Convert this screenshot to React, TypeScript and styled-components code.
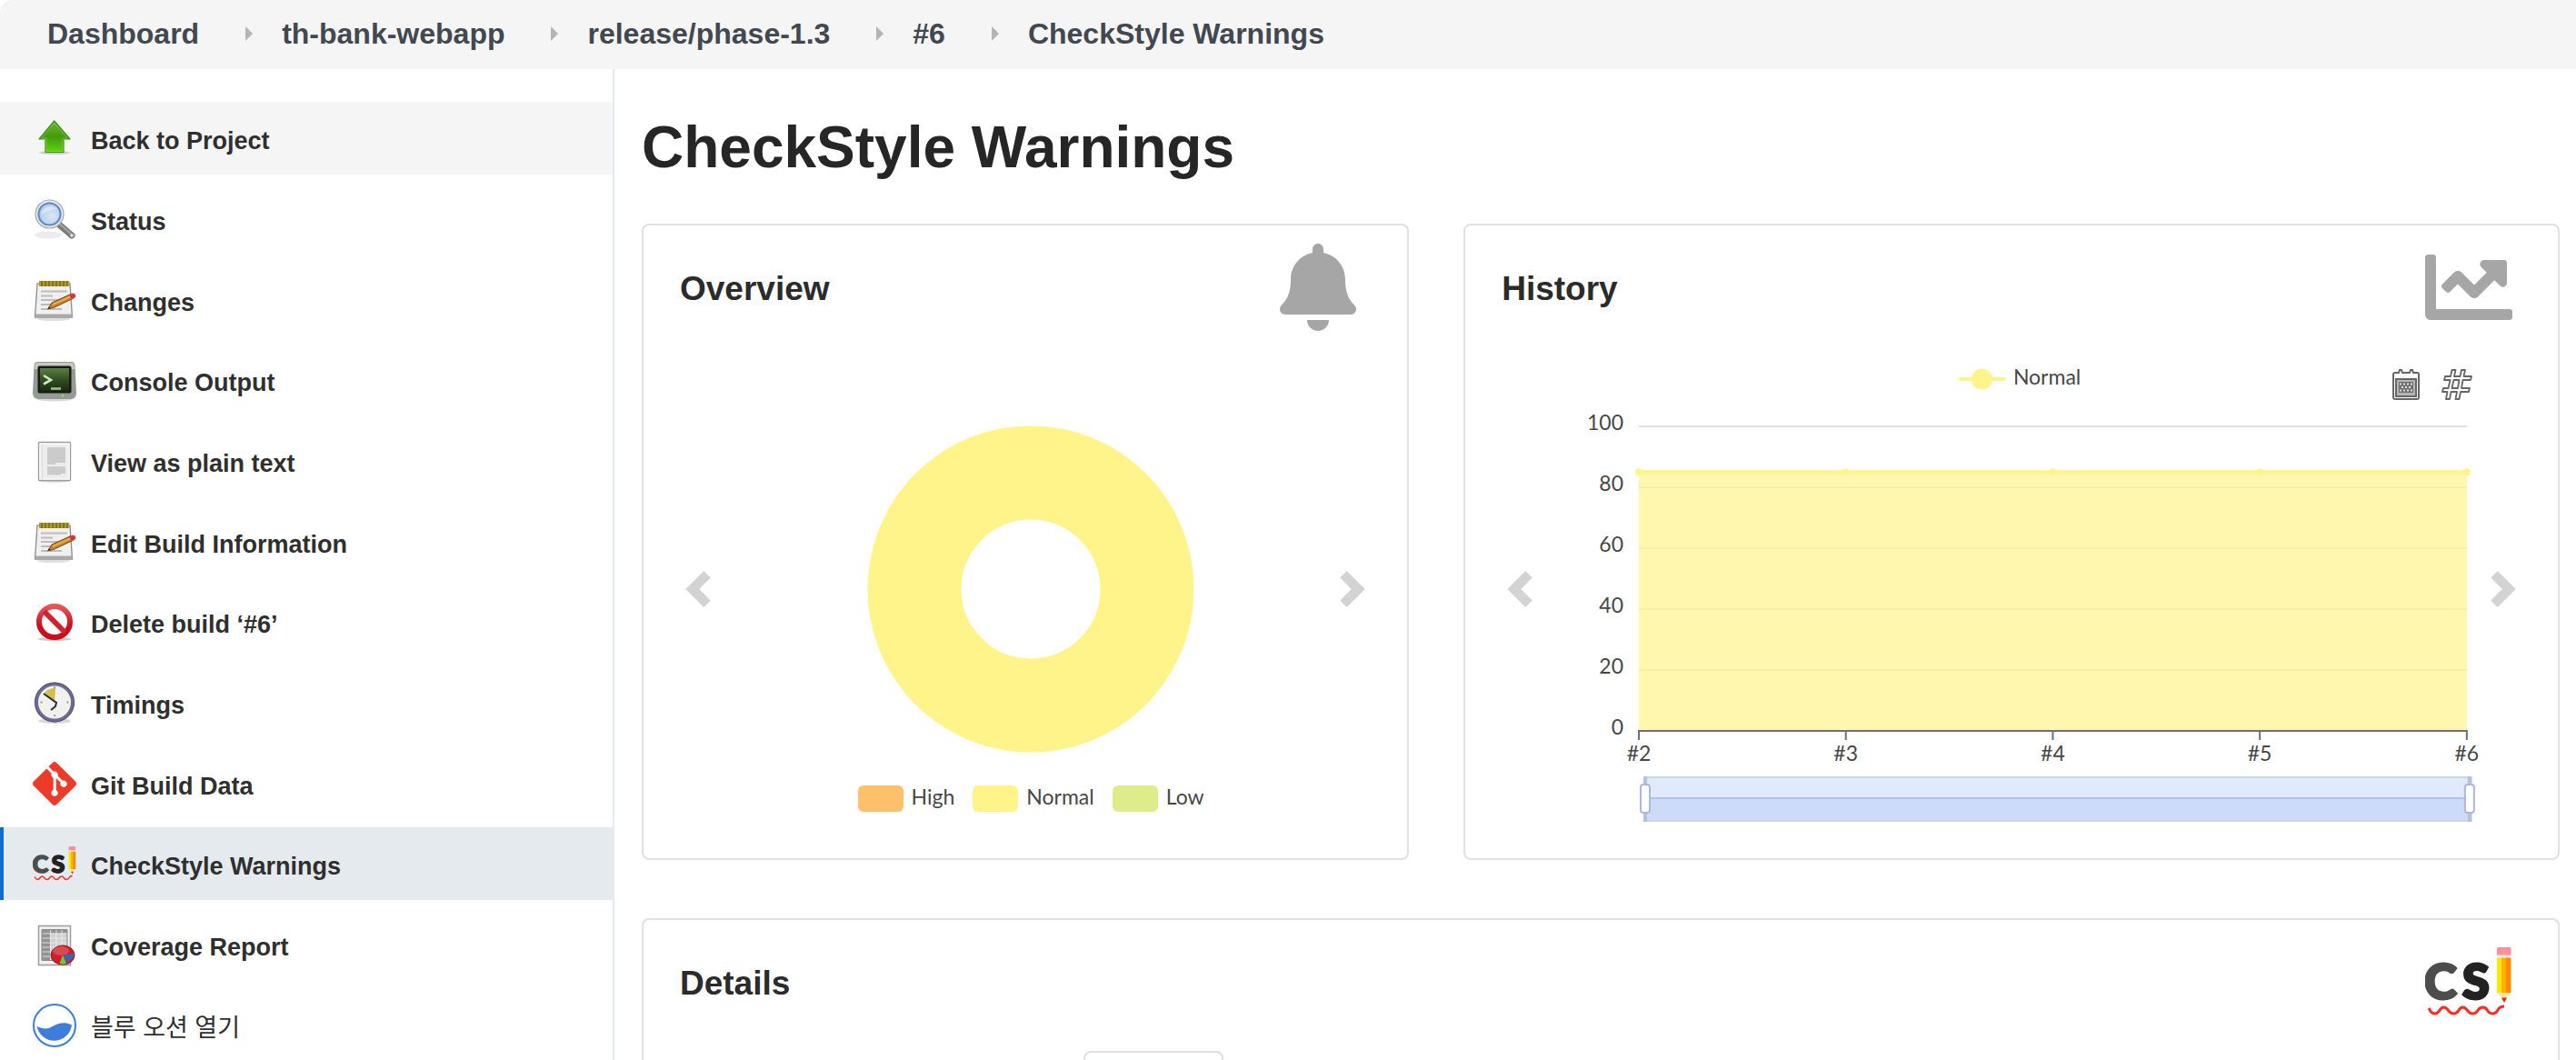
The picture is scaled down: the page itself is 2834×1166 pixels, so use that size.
import React from "react";
import styled, { createGlobalStyle, css } from "styled-components";
import { FaBell, FaChartLine } from "react-icons/fa";
import { SiGit } from "react-icons/si";

const GlobalStyle = createGlobalStyle`
  *, *::before, *::after { box-sizing: border-box; }
  body {
    margin: 0;
    background: #fff;
    color: #2b2b2b;
    font-family: "Liberation Sans", "Noto Sans CJK KR", sans-serif;
  }
`;

const Shell = styled.div`
  height: 100vh;
  overflow-y: auto;
  scrollbar-width: none;
`;

/* ---------- Breadcrumbs ---------- */

const Breadcrumbs = styled.nav`
  background: #f5f5f5;
  border-top-left-radius: 14px;
`;

const CrumbList = styled.ol`
  display: flex;
  align-items: center;
  height: 76px;
  margin: 0;
  padding: 0 52px 2px;
  list-style: none;
`;

const Crumb = styled.li`
  display: flex;
  align-items: center;

  & + &::before {
    content: "";
    margin: 0 32px 0 51px;
    border: 8px solid transparent;
    border-left-color: #b4b4b4;
    border-right-width: 0;
  }
`;

const CrumbLink = styled.a`
  color: #414851;
  font-size: 32px;
  font-weight: 700;
  line-height: 40px;
  text-decoration: none;
  white-space: nowrap;
`;

/* ---------- Sidebar ---------- */

const Body = styled.div`
  display: grid;
  grid-template-columns: 676px minmax(0, 1fr);
`;

const Sidebar = styled.nav`
  padding-top: 36px;
  border-right: 2px solid #e3eaf0;
`;

const TaskList = styled.ul`
  margin: 0;
  padding: 0;
  list-style: none;
`;

const Task = styled.li`
  margin-bottom: 9px;

  &:nth-child(3n) {
    margin-bottom: 8px;
  }
`;

const TaskLink = styled.a<{ $state?: "hover" | "active" }>`
  display: flex;
  align-items: center;
  gap: 16px;
  height: 80px;
  padding: 0 32px;
  border-left: 4px solid transparent;
  color: #2f2f2f;
  font-size: 27px;
  font-weight: 700;
  text-decoration: none;

  ${(p) => p.$state === "hover" && css`
    background: #f5f5f5;
    border-left-color: #f5f5f5;
  `}
  ${(p) => p.$state === "active" && css`
    background: #e5eaee;
    border-left-color: #0b6ed0;
  `}
`;

const TaskIcon = styled.span`
  display: flex;
  width: 48px;
  height: 48px;

  & > svg {
    width: 100%;
    height: 100%;
  }
`;

const TaskLabel = styled.span<{ $light?: boolean }>`
  padding-top: 5px;
  line-height: 32px;
  font-weight: ${(p) => (p.$light ? 400 : 700)};
`;

/* ---------- Main ---------- */

const Main = styled.main`
  padding: 46px 18px 0 30px;
`;

const PageTitle = styled.h1`
  margin: 0 0 44px;
  font-size: 64px;
  font-weight: 700;
  line-height: 80px;
  color: #262626;
`;

const Grid = styled.div`
  display: grid;
  grid-template-columns: repeat(12, minmax(0, 1fr));
  gap: 64px 60px;
`;

const Card = styled.section<{ $span: number }>`
  grid-column: span ${(p) => p.$span};
  border: 2px solid #e0e0e0;
  border-radius: 8px;
  background: #fff;
`;

const CardHeader = styled.header`
  display: flex;
  align-items: center;
  justify-content: space-between;
  padding: 20px 50px 0 40px;
`;

const CardTitle = styled.h2`
  margin: 0;
  padding-top: 3px;
  font-size: 37px;
  font-weight: 700;
  line-height: 44px;
`;

const CardIcon = styled.span`
  display: flex;
  align-items: center;
  justify-content: center;
  width: 96px;
  height: 96px;
  color: #a6a6a6;
  font-size: 96px;
`;

const Carousel = styled.div`
  display: grid;
  grid-template-columns: 40px minmax(0, 1fr) 40px;
  align-items: center;
  padding: 28px 40px 40px;
`;

const CarouselButton = styled.button`
  width: 40px;
  height: 40px;
  padding: 0;
  border: 0;
  background: none;
  color: #d3d3d3;

  & > svg {
    display: block;
    width: 100%;
    height: 100%;
  }
`;

const Slide = styled.div`
  display: flex;
  flex-direction: column;
  height: 512px;
`;

const PieSlide = styled(Slide)`
  align-items: center;
  gap: 36px;
  padding: 76px 0 0 12px;
`;

const Pie = styled.svg`
  width: 360px;
  height: 360px;
`;

const PieLegend = styled.div`
  display: flex;
  gap: 20px;
`;

const LegendItem = styled.button`
  display: flex;
  align-items: center;
  gap: 9px;
  padding: 0;
  border: 0;
  background: none;
  color: #474747;
  font-family: Lato, "Noto Sans", sans-serif;
  font-size: 23px;
  line-height: 24px;
`;

const Swatch = styled.span<{ $color: string }>`
  width: 50px;
  height: 29px;
  border-radius: 6px;
  background: ${(p) => p.$color};
`;

const SwatchLabel = styled.span`
  padding-bottom: 5px;
`;

const ChartTop = styled.div`
  display: grid;
  grid-template-columns: 1fr auto 1fr;
  align-items: start;
  height: 56px;
  padding: 10px 14px 0 32px;
`;

const LineMarker = styled.svg`
  width: 51px;
  height: 24px;
  overflow: visible;
`;

const Toolbox = styled.div`
  display: flex;
  justify-content: end;
  gap: 22px;
  padding-top: 4px;
`;

const ToolButton = styled.button`
  width: 34px;
  height: 34px;
  padding: 0;
  border: 0;
  background: none;
  color: #666;

  & > svg {
    display: block;
    width: 100%;
    height: 100%;
  }
`;

const Plot = styled.svg`
  width: 100%;
  height: 456px;
  overflow: visible;

  text {
    fill: #474747;
    font-family: Lato, "Noto Sans", sans-serif;
    font-size: 23px;
  }
`;

const Tabs = styled.div`
  display: flex;
  padding: 28px 40px 40px 484px;
`;

const Tab = styled.button`
  width: 154px;
  height: 80px;
  border: 2px solid #dce1e6;
  border-bottom-color: #fff;
  border-radius: 8px 8px 0 0;
  background: #fff;
`;

/* ---------- Icons ---------- */

const UpIcon = () => (
  <svg viewBox="0 0 48 48" aria-hidden="true">
    <defs>
      <linearGradient id="up" x1="0" y1="0" x2="0" y2="1">
        <stop offset="0" stopColor="#6cbb33" />
        <stop offset=".5" stopColor="#439a0e" />
        <stop offset="1" stopColor="#5fd50a" />
      </linearGradient>
    </defs>
    <ellipse cx="24" cy="40" rx="17" ry="2" fill="#000" opacity=".15" />
    <path d="M23.700 5 41 25H34V39.500H14V25H7Z" fill="url(#up)" stroke="#3f8f12" strokeWidth="1.200" strokeLinejoin="round" />
    <path d="M23.700 7 38 24H33V38.500H15V24H9.500Z" fill="none" stroke="#9be35f" strokeWidth=".8" opacity=".6" />
  </svg>
);

const SearchIcon = () => (
  <svg viewBox="0 0 48 48" aria-hidden="true">
    <defs>
      <radialGradient id="lens" cx=".6" cy=".6" r=".7">
        <stop offset="0" stopColor="#dbe7f6" />
        <stop offset="1" stopColor="#a9c6ec" />
      </radialGradient>
    </defs>
    <ellipse cx="17" cy="41.500" rx="15" ry="4" fill="#000" opacity=".08" />
    <path d="M29 30 43 42" stroke="#7c7c7c" strokeWidth="7" strokeLinecap="round" />
    <path d="M30 29.500 43 41" stroke="#a5a5a5" strokeWidth="2" strokeLinecap="round" />
    <circle cx="43" cy="42" r="1.800" fill="#e6e6e6" />
    <circle cx="18.500" cy="18.500" r="15.500" fill="#e8e8e6" stroke="#a9aaa8" strokeWidth="1.200" />
    <circle cx="18.500" cy="18.500" r="12" fill="url(#lens)" stroke="#5f8cc7" strokeWidth="2.200" />
    <path d="M9.500 20c0-6 4-10 10-10 3 0 5 1 7 3-7 0-12 3-17 7Z" fill="#fff" opacity=".4" />
  </svg>
);

const NotepadIcon = () => (
  <svg viewBox="0 0 48 48" aria-hidden="true">
    <ellipse cx="23" cy="45" rx="18" ry="2" fill="#000" opacity=".12" />
    <path d="M5 6H41L43.500 43H2.500Z" fill="#f0f0f0" stroke="#929292" strokeWidth="1.400" />
    <path d="M3 39.500H43.500V43.500H2.500Z" fill="#a8a9a8" />
    <rect x="7" y="3" width="33" height="6" fill="#85751a" />
    <path d="M8 3v6M12 3v6M16 3v6M20 3v6M24 3v6M28 3v6M32 3v6M36 3v6M39.500 3v6" stroke="#b5a32c" strokeWidth="1.600" />
    <path d="M9 14.500H38M9 19.500H22M9 24H30M9 29H21M9 34H32" stroke="#bcbcbc" strokeWidth="2" />
    <path d="M16.500 34 21 27 42 17.500 45 22 24 32Z" fill="#c98628" stroke="#75490f" strokeWidth="1" />
    <path d="M22 29 42 20" stroke="#eab45e" strokeWidth="1.400" />
    <path d="M16.500 34 18 31 20 33Z" fill="#4b3a1a" />
    <path d="M40 18.500 44 16.500Q48 17 47 21L43 23Z" fill="#e0323a" />
  </svg>
);

const ConsoleIcon = () => (
  <svg viewBox="0 0 48 48" aria-hidden="true">
    <defs>
      <linearGradient id="screen" x1="0" y1="0" x2="0" y2="1">
        <stop offset="0" stopColor="#5c8044" />
        <stop offset=".55" stopColor="#2f4b20" />
        <stop offset="1" stopColor="#1a2b12" />
      </linearGradient>
    </defs>
    <ellipse cx="24" cy="45" rx="19" ry="2.500" fill="#000" opacity=".15" />
    <path d="M5 4H43Q46 4 46.500 8L48 38Q48 45 42 45H6Q0 45 0 38L1.500 8Q2 4 5 4Z" fill="#959a94" />
    <path d="M5 5H43Q45 5 45.500 8L46 12H2L2.500 8Q3 5 5 5Z" fill="#c5c8c4" />
    <rect x="5.500" y="8.500" width="37" height="30" rx="2" fill="#171c14" />
    <rect x="8" y="11" width="32" height="25" fill="url(#screen)" />
    <path d="M12 19 20 24 12 28.500" fill="none" stroke="#c7ecc4" strokeWidth="2.600" />
    <path d="M20 33.500H31" stroke="#97c48e" strokeWidth="2.600" />
    <circle cx="33" cy="41" r="1.300" fill="#78ee3c" />
  </svg>
);

const DocumentIcon = () => (
  <svg viewBox="0 0 48 48" aria-hidden="true">
    <ellipse cx="24" cy="46" rx="17" ry="1.800" fill="#000" opacity=".15" />
    <rect x="6.500" y="3.500" width="35" height="42" rx="1" fill="#ededed" stroke="#9c9c9c" strokeWidth="1.400" />
    <rect x="8" y="5" width="32" height="39" fill="none" stroke="#fff" />
    <path d="M16 9H36V26H25V28H16ZM16 30H36V38H31V39.500H16Z" fill="#cbcbcb" />
    <path d="M10.500 6V44" stroke="#dcdcdc" />
  </svg>
);

const DeleteIcon = () => (
  <svg viewBox="0 0 48 48" aria-hidden="true">
    <defs>
      <linearGradient id="ban" x1="0" y1="0" x2="0" y2="1">
        <stop offset="0" stopColor="#e4565a" />
        <stop offset=".6" stopColor="#cf1020" />
        <stop offset="1" stopColor="#cc0a1a" />
      </linearGradient>
    </defs>
    <ellipse cx="24" cy="43" rx="18" ry="2" fill="#000" opacity=".2" />
    <circle cx="24" cy="24" r="17" fill="#fff" stroke="url(#ban)" strokeWidth="6" />
    <path d="M12.500 12.500 35.500 35.500" stroke="#d3222d" strokeWidth="6" />
  </svg>
);

const ClockIcon = () => (
  <svg viewBox="0 0 48 48" aria-hidden="true">
    <ellipse cx="24" cy="44" rx="18" ry="3" fill="#000" opacity=".15" />
    <circle cx="24" cy="23.500" r="20" fill="#f1f1ee" stroke="#6d6b93" strokeWidth="4" />
    <circle cx="24" cy="23.500" r="21.500" fill="none" stroke="#4c4a70" strokeWidth=".8" />
    <path d="M24 24 13 13Q17 8 25 8Z" fill="#d5be4e" />
    <path d="M12 14 26 24 25 28 20 32" fill="none" stroke="#2c2c2c" strokeWidth="2" />
    <path d="M24 6.500v2M24 37v2M8.500 23.500h2M37.500 23.500h2" stroke="#9c9c9c" strokeWidth="2" />
  </svg>
);

const CheckStyleIcon = () => (
  <svg viewBox="0 0 96 96" aria-hidden="true">
    <text x="-1" y="67" fontFamily="Lato, sans-serif" fontWeight="900" fontSize="54" fill="#4d4d4d" stroke="#4d4d4d" strokeWidth="3">C</text>
    <text x="41" y="67" fontFamily="Lato, sans-serif" fontWeight="900" fontSize="54" fill="#222" stroke="#222" strokeWidth="3">S</text>
    <rect x="79" y="10" width="15.500" height="10" rx="1.500" fill="#ff8f9c" />
    <rect x="79" y="18.500" width="15.500" height="3" fill="#ececec" />
    <rect x="79" y="21.500" width="6" height="38.500" fill="#ffe50a" />
    <rect x="84" y="21.500" width="6" height="38.500" fill="#ffb300" />
    <rect x="89" y="21.500" width="5.500" height="38.500" fill="#ff8a00" />
    <path d="M79 60H94.500L89.500 66H84.500Z" fill="#ffe79a" />
    <path d="M84 65.500H90L87 71Z" fill="#e0201b" />
    <path d="M4 77Q7 83 10.500 83C17 83 15 76 20.500 76S25 83 31.500 83 36 76 41.500 76 46 83 52.500 83 57 76 63.500 76 67 83 74 83Q78 83 80 79T87 75" fill="none" stroke="#ff2a22" strokeWidth="3" />
  </svg>
);

const CoverageIcon = () => (
  <svg viewBox="0 0 48 48" aria-hidden="true">
    <rect x="6.500" y="3.500" width="35" height="43" fill="#f2f2f2" stroke="#9c9c9c" strokeWidth="1.500" />
    <rect x="10" y="7.500" width="28" height="34" fill="#d0d0d0" />
    <rect x="10" y="7.500" width="9" height="34" fill="#939393" />
    <rect x="10" y="7.500" width="28" height="4" fill="#939393" />
    <path d="M10 12H38M10 17H38M10 22H38M10 27H38M10 32H38M10 37H38M19.500 7V42M26 7V42M32 7V42" stroke="#eee" strokeWidth=".8" />
    <path d="M10 7.500H38V41.500H10Z" fill="none" stroke="#8a8a8a" />
    <ellipse cx="33" cy="36.500" rx="13.500" ry="10.500" fill="#000" opacity=".2" />
    <ellipse cx="33" cy="35.500" rx="13" ry="10.500" fill="#cf1f2a" stroke="#8c1018" strokeWidth=".8" />
    <ellipse cx="31" cy="31" rx="9" ry="5" fill="#fff" opacity=".2" />
    <path d="M33 35.500 45.500 34Q45 40 38 43.500Z" fill="#3665b5" />
    <path d="M33 35.500 37 45Q33 46.500 29.500 45Z" fill="#73c92d" />
  </svg>
);

const BlueOceanIcon = () => (
  <svg viewBox="0 0 48 48" aria-hidden="true">
    <circle cx="24" cy="24" r="23" fill="#fff" stroke="#3d7edb" strokeWidth="2" />
    <path d="M4.500 25Q12 29 19 26.500C26 23 32 18.500 43 23.500A19.500 19.500 0 0 1 4.500 25Z" fill="#3d7edb" />
  </svg>
);

const Chevron = ({ d }: { d: string }) => (
  <svg viewBox="0 0 8 8" fill="currentColor" aria-hidden="true">
    <path d={d} />
  </svg>
);

const PREV = "M5.250 0l-4 4 4 4 1.500-1.500-2.500-2.500 2.500-2.500-1.500-1.500z";
const NEXT = "M2.750 0l-1.500 1.500 2.500 2.500-2.500 2.500 1.500 1.500 4-4-4-4z";

const CalendarIcon = () => (
  <svg viewBox="0 0 34 34" fill="none" stroke="currentColor" strokeWidth="2" aria-hidden="true">
    <path d="M5 4H9L10 1H12L13 4H21L22 1H24L25 4H29Q31 4 31 6V31Q31 33 29 33H5Q3 33 3 31V6Q3 4 5 4Z" />
    <path d="M6 11H28V30H6Z" fill="#b5b5b5" />
    <path d="M9 14H25V26H9Z" fill="#707070" stroke="none" />
    <path d="M10 16.500H24M10 23.500H24" stroke="#ddd" strokeDasharray="2 2" />
    <path d="M12 20H24" stroke="#ddd" strokeDasharray="2 2" />
  </svg>
);

const HashIcon = () => (
  <svg viewBox="0 0 34 34" fill="none" stroke="currentColor" strokeWidth="1.800" strokeLinejoin="round" aria-hidden="true">
    <path d="M11.500 1H15.500L14 8H20.500L22 1H26L24.500 8H33L32 12H23.500L22 21H31L30 25H21L19.500 33H15.500L17 25H10.500L9 33H5L6.500 25H1L2 21H7.500L9.500 12H3L4 8H10Z" />
    <path d="M13.500 12H19.500L18 21H11.500Z" />
  </svg>
);

/* ---------- Data ---------- */

const crumbs = ["Dashboard", "th-bank-webapp", "release/phase-1.3", "#6", "CheckStyle Warnings"];

type TaskEntry = { label: string; icon: React.ReactNode; state?: "hover" | "active"; light?: boolean };

const tasks: TaskEntry[] = [
  { label: "Back to Project", icon: <UpIcon />, state: "hover" },
  { label: "Status", icon: <SearchIcon /> },
  { label: "Changes", icon: <NotepadIcon /> },
  { label: "Console Output", icon: <ConsoleIcon /> },
  { label: "View as plain text", icon: <DocumentIcon /> },
  { label: "Edit Build Information", icon: <NotepadIcon /> },
  { label: "Delete build ‘#6’", icon: <DeleteIcon /> },
  { label: "Timings", icon: <ClockIcon /> },
  { label: "Git Build Data", icon: <SiGit color="#ee3a29" /> },
  { label: "CheckStyle Warnings", icon: <CheckStyleIcon />, state: "active" },
  { label: "Coverage Report", icon: <CoverageIcon /> },
  { label: "블루 오션 열기", icon: <BlueOceanIcon />, light: true },
];

const severities = [
  { name: "High", color: "#ffc06c" },
  { name: "Normal", color: "#fff48a" },
  { name: "Low", color: "#dfec8a" },
];

const history = [
  { build: "#2", normal: 85 },
  { build: "#3", normal: 85 },
  { build: "#4", normal: 85 },
  { build: "#5", normal: 85 },
  { build: "#6", normal: 85 },
];

/* ---------- Charts ---------- */

const LEFT = 111;
const RIGHT = 1022;
const TOP = 21;
const BASE = 356;

const xAt = (i: number) => LEFT + ((RIGHT - LEFT) * i) / (history.length - 1);
const yAt = (v: number) => BASE - ((BASE - TOP) * v) / 100;

function HistoryPlot() {
  const line = history.map((h, i) => `${xAt(i)},${yAt(h.normal)}`).join(" ");
  return (
    <Plot viewBox="0 0 1042 456" role="img" aria-label="History">
      {[20, 40, 60, 80, 100].map((v) => (
        <line key={v} x1={LEFT} x2={RIGHT} y1={yAt(v)} y2={yAt(v)} stroke="#dae1ef" strokeWidth="2" />
      ))}
      <polygon points={`${LEFT},${BASE} ${line} ${RIGHT},${BASE}`} fill="#fff48a" opacity=".7" />
      <polyline points={line} fill="none" stroke="#fff48a" strokeWidth="4" />
      {history.map((h, i) => (
        <circle key={h.build} cx={xAt(i)} cy={yAt(h.normal)} r="4" fill="#fff48a" />
      ))}
      <line x1={LEFT - 1} x2={RIGHT + 1} y1={BASE} y2={BASE} stroke="#6b6f7b" strokeWidth="2" />
      {history.map((h, i) => (
        <React.Fragment key={h.build}>
          <line x1={xAt(i)} x2={xAt(i)} y1={BASE} y2={BASE + 10} stroke="#6b6f7b" strokeWidth="2" />
          <text x={xAt(i)} y={BASE + 33} textAnchor="middle">{h.build}</text>
        </React.Fragment>
      ))}
      {[0, 20, 40, 60, 80, 100].map((v) => (
        <text key={v} x={LEFT - 17} y={yAt(v) + 4} textAnchor="end">{v}</text>
      ))}
      <rect x="117" y="407" width="910" height="48" fill="#e1e9fd" stroke="#cad5ea" strokeWidth="2" />
      <rect x="118" y="430" width="908" height="24" fill="#cddbfa" />
      <line x1="118" x2="1026" y1="430" y2="430" stroke="#abc3f4" strokeWidth="2" />
      {[118, 1025].map((x) => (
        <React.Fragment key={x}>
          <line x1={x} x2={x} y1="406" y2="456" stroke="#b3c0de" strokeWidth="4" />
          <rect x={x - 5} y="415" width="10" height="31" rx="3" fill="#fff" stroke="#acb8d8" strokeWidth="2" />
        </React.Fragment>
      ))}
    </Plot>
  );
}

function CarouselFrame({ name, children }: { name: string; children: React.ReactNode }) {
  return (
    <Carousel>
      <CarouselButton type="button" aria-label={`Previous ${name}`}><Chevron d={PREV} /></CarouselButton>
      {children}
      <CarouselButton type="button" aria-label={`Next ${name}`}><Chevron d={NEXT} /></CarouselButton>
    </Carousel>
  );
}

export default function App() {
  return (
    <>
      <GlobalStyle />
      <Shell>
        <Breadcrumbs aria-label="Breadcrumb">
          <CrumbList>
            {crumbs.map((c) => (
              <Crumb key={c}><CrumbLink href="#">{c}</CrumbLink></Crumb>
            ))}
          </CrumbList>
        </Breadcrumbs>
        <Body>
          <Sidebar aria-label="Tasks">
            <TaskList>
              {tasks.map((t) => (
                <Task key={t.label}>
                  <TaskLink href="#" $state={t.state}>
                    <TaskIcon>{t.icon}</TaskIcon>
                    <TaskLabel $light={t.light}>{t.label}</TaskLabel>
                  </TaskLink>
                </Task>
              ))}
            </TaskList>
          </Sidebar>
          <Main>
            <PageTitle>CheckStyle Warnings</PageTitle>
            <Grid>
              <Card $span={5}>
                <CardHeader>
                  <CardTitle>Overview</CardTitle>
                  <CardIcon><FaBell /></CardIcon>
                </CardHeader>
                <CarouselFrame name="overview">
                  <PieSlide>
                    <Pie viewBox="0 0 360 360" role="img" aria-label="Severities">
                      <circle cx="180" cy="180" r="128" fill="none" stroke="#fff48a" strokeWidth="103" />
                    </Pie>
                    <PieLegend>
                      {severities.map((s) => (
                        <LegendItem key={s.name} type="button">
                          <Swatch $color={s.color} />
                          <SwatchLabel>{s.name}</SwatchLabel>
                        </LegendItem>
                      ))}
                    </PieLegend>
                  </PieSlide>
                </CarouselFrame>
              </Card>
              <Card $span={7}>
                <CardHeader>
                  <CardTitle>History</CardTitle>
                  <CardIcon><FaChartLine /></CardIcon>
                </CardHeader>
                <CarouselFrame name="history">
                  <Slide>
                    <ChartTop>
                      <span />
                      <LegendItem type="button">
                        <LineMarker viewBox="0 0 51 24" aria-hidden="true">
                          <path d="M0 15H51" stroke="#fff48a" strokeWidth="4" />
                          <circle cx="25.500" cy="15" r="11.500" fill="#fff48a" />
                        </LineMarker>
                        Normal
                      </LegendItem>
                      <Toolbox>
                        <ToolButton type="button" aria-label="Show dates"><CalendarIcon /></ToolButton>
                        <ToolButton type="button" aria-label="Show build numbers"><HashIcon /></ToolButton>
                      </Toolbox>
                    </ChartTop>
                    <HistoryPlot />
                  </Slide>
                </CarouselFrame>
              </Card>
              <Card $span={12}>
                <CardHeader>
                  <CardTitle>Details</CardTitle>
                  <CardIcon><CheckStyleIcon /></CardIcon>
                </CardHeader>
                <Tabs role="tablist">
                  <Tab type="button" role="tab" aria-selected="true" />
                </Tabs>
              </Card>
            </Grid>
          </Main>
        </Body>
      </Shell>
    </>
  );
}
